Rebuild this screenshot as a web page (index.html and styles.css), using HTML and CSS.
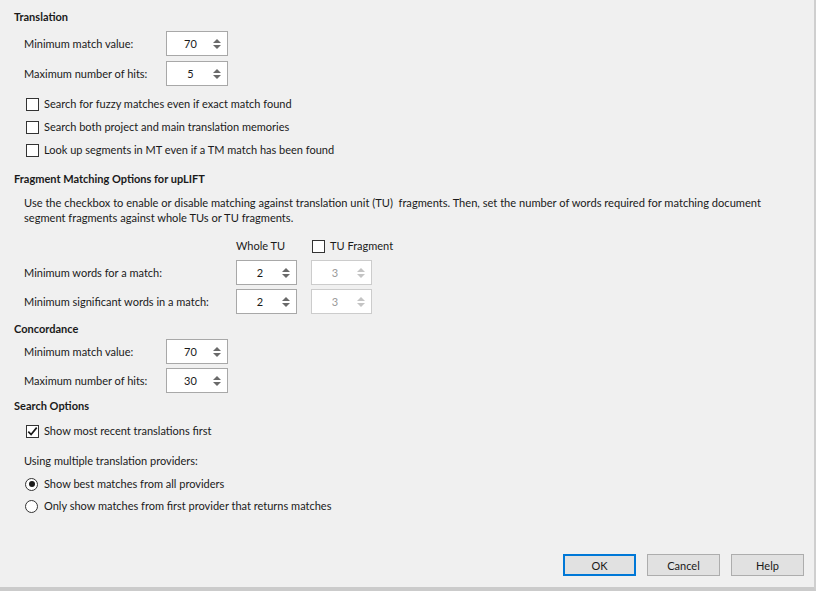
FILE: index.html
```html
<!DOCTYPE html>
<html>
<head>
<meta charset="utf-8">
<link rel="stylesheet" href="styles.css">
</head>
<body>
<div class="dialog">
  <div class="content">
    <div class="heading h-translation">Translation</div>
    <div class="field-grid g1">
      <div class="label">Minimum match value:</div>
      <div class="spin"><span class="val">70</span><span class="arrows"><i class="up"></i><i class="down"></i></span></div>
      <div class="label">Maximum number of hits:</div>
      <div class="spin"><span class="val">5</span><span class="arrows"><i class="up"></i><i class="down"></i></span></div>
    </div>
    <div class="checks c1">
      <label class="check"><span class="box"></span>Search for fuzzy matches even if exact match found</label>
      <label class="check"><span class="box"></span>Search both project and main translation memories</label>
      <label class="check"><span class="box"></span>Look up segments in MT even if a TM match has been found</label>
    </div>

    <div class="heading h-fragment">Fragment Matching Options for upLIFT</div>
    <p class="desc">Use the checkbox to enable or disable matching against translation unit (TU)&nbsp; fragments. Then, set the number of words required for matching document<br>segment fragments against whole TUs or TU fragments.</p>
    <div class="frag-grid">
      <div></div>
      <div class="colhead">Whole TU</div>
      <label class="check colhead fragcheck"><span class="box"></span>TU Fragment</label>
      <div class="label">Minimum words for a match:</div>
      <div class="spin"><span class="val">2</span><span class="arrows"><i class="up"></i><i class="down"></i></span></div>
      <div class="spin disabled"><span class="val">3</span><span class="arrows"><i class="up"></i><i class="down"></i></span></div>
      <div class="label">Minimum significant words in a match:</div>
      <div class="spin"><span class="val">2</span><span class="arrows"><i class="up"></i><i class="down"></i></span></div>
      <div class="spin disabled"><span class="val">3</span><span class="arrows"><i class="up"></i><i class="down"></i></span></div>
    </div>

    <div class="heading h-conc">Concordance</div>
    <div class="field-grid g2">
      <div class="label">Minimum match value:</div>
      <div class="spin"><span class="val">70</span><span class="arrows"><i class="up"></i><i class="down"></i></span></div>
      <div class="label">Maximum number of hits:</div>
      <div class="spin"><span class="val">30</span><span class="arrows"><i class="up"></i><i class="down"></i></span></div>
    </div>

    <div class="heading h-search">Search Options</div>
    <label class="check c2"><span class="box checked"><svg width="11" height="11" viewBox="0 0 11 11"><path d="M1.3 5.6 L4.1 8.5 L9.7 1.6" fill="none" stroke="#1a1a1a" stroke-width="1.7"/></svg></span>Show most recent translations first</label>
    <div class="using">Using multiple translation providers:</div>
    <div class="radios">
      <label class="radio"><span class="circle on"></span>Show best matches from all providers</label>
      <label class="radio"><span class="circle"></span>Only show matches from first provider that returns matches</label>
    </div>
  </div>
  <div class="buttons">
    <button class="btn default">OK</button>
    <button class="btn">Cancel</button>
    <button class="btn">Help</button>
  </div>
</div>
</body>
</html>
```
FILE: styles.css
```css
* { box-sizing: border-box; }
html, body { margin: 0; padding: 0; }
body {
  width: 816px;
  height: 591px;
  background: #f0f0f0;
  font-family: Lato, "Noto Sans", sans-serif;
  font-size: 11px;
  color: #1a1a1a;
  overflow: hidden;
}
.dialog {
  width: 816px;
  height: 591px;
  border-right: 2px solid #cfcfcf;
  border-bottom: 4px solid #cbcbcb;
  display: flex;
  flex-direction: column;
  justify-content: space-between;
}
.content {
  padding: 8px 0 0 14px;
  white-space: nowrap;
}
.heading {
  font-weight: bold;
  height: 18px;
  line-height: 18px;
}
.field-grid {
  display: grid;
  grid-template-columns: 142px 62px;
  row-gap: 5px;
  align-items: center;
  padding-left: 10px;
}
.g1 { margin-top: 5px; }
.label { line-height: 16px; }
.spin {
  height: 25px;
  background: #fff;
  border: 1px solid #a8a8a8;
  display: flex;
  align-items: center;
}
.spin .val {
  flex: 1;
  text-align: center;
  padding-left: 5px;
}
.spin .arrows {
  width: 18px;
  display: flex;
  flex-direction: column;
  align-items: center;
  gap: 2px;
  padding-right: 3px;
}
.spin i {
  display: block;
  width: 0; height: 0;
  border-left: 4px solid transparent;
  border-right: 4px solid transparent;
}
.spin i.up { border-bottom: 4px solid #6a6a6a; }
.spin i.down { border-top: 4px solid #6a6a6a; }
.spin.disabled { border-color: #cccccc; color: #9a9a9a; }
.spin.disabled i.up { border-bottom-color: #c4c4c4; }
.spin.disabled i.down { border-top-color: #c4c4c4; }

.checks { display: flex; flex-direction: column; gap: 7px; margin-top: 10px; padding-left: 12px; }
.check { display: flex; align-items: center; height: 16px; line-height: 16px; }
.box {
  width: 13px; height: 13px;
  border: 1px solid #333;
  background: #fff;
  margin-right: 5px;
  display: inline-flex;
  align-items: center;
  justify-content: center;
  flex: none;
}
.h-fragment { margin-top: 12px; }
.desc {
  margin: 7px 0 0 10px;
  line-height: 15px;
  font-size: 11.1px;
}
.frag-grid {
  display: grid;
  grid-template-columns: 198px 61px 61px;
  column-gap: 14px;
  row-gap: 4px;
  align-items: center;
  padding-left: 10px;
  margin-top: 12px;
}
.colhead { height: 18px; line-height: 18px; margin-bottom: 1px; }
.fragcheck { margin-left: 1px; }
.h-conc { margin-top: 6px; }
.g2 { margin-top: 1px; row-gap: 4px; }
.h-search { margin-top: 4px; }
.c2 { margin: 8px 0 0 12px; }
.using { margin: 14px 0 0 10px; height: 16px; line-height: 16px; }
.radios { display: flex; flex-direction: column; gap: 6px; margin: 7px 0 0 11px; }
.radio { display: flex; align-items: center; height: 16px; line-height: 16px; }
.circle {
  width: 13px; height: 13px;
  border-radius: 50%;
  border: 1px solid #333;
  background: #fff;
  margin-right: 6px;
  position: relative;
  flex: none;
}
.circle.on::after {
  content: "";
  position: absolute;
  left: 2.5px; top: 2.5px;
  width: 6px; height: 6px;
  border-radius: 50%;
  background: #1a1a1a;
}
.buttons {
  display: flex;
  justify-content: flex-end;
  gap: 11px;
  padding: 0 10px 11px 0;
}
.btn {
  width: 73px;
  height: 22px;
  font-family: inherit;
  font-size: 11px;
  color: #1a1a1a;
  background: #e1e1e1;
  border: 1px solid #adadad;
  padding: 0;
}
.btn.default {
  border: 2px solid #0078d7;
}
```
